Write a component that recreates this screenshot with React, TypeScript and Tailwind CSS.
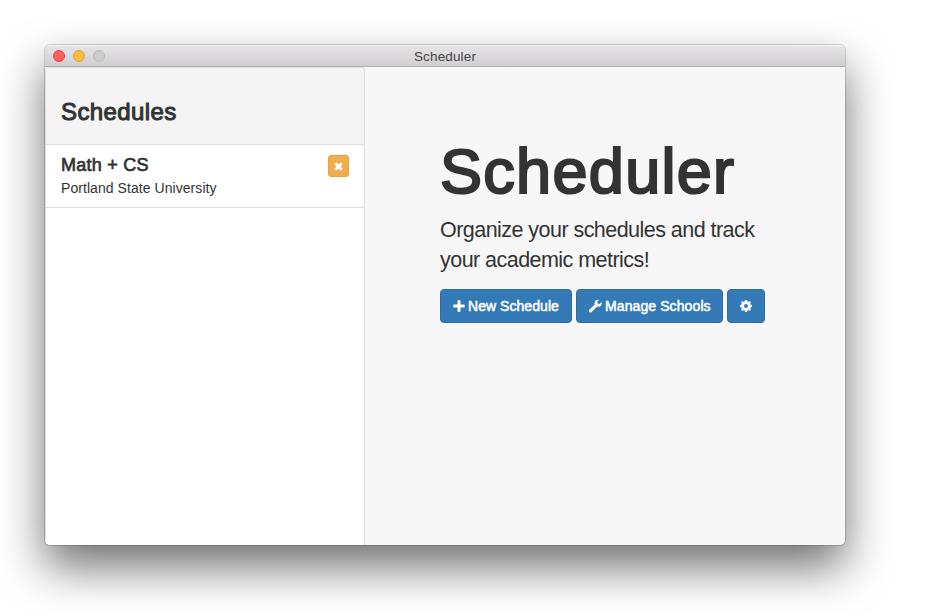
import React from "react";

function PlusIcon() {
  return (
    <svg viewBox="0 0 12 12" className="h-3 w-3 shrink-0" fill="currentColor">
      <path d="M5 .3h2a.5.5 0 0 1 .5.5v3.700h3.700a.5.5 0 0 1 .5.5v2a.5.5 0 0 1-.5.5H7.500v3.700a.5.5 0 0 1-.5.5H5a.5.5 0 0 1-.5-.5V7.500H.8a.5.5 0 0 1-.5-.5V5a.5.5 0 0 1 .5-.5h3.700V.8a.5.5 0 0 1 .5-.5z" />
    </svg>
  );
}

function WrenchIcon() {
  return (
    <svg viewBox="0 0 14 14" className="h-3.5 w-3.5 shrink-0" fill="currentColor">
      <path d="M11 .8 9.200 2.700l.4 1.800 1.900.5 2-1.900c.4 1.400 0 2.900-1 3.800-1 .9-2.300 1.100-3.500.7l-5.300 5.400a1.650 1.650 0 0 1-2.400-2.300l5.400-5.200c-.4-1.200-.1-2.700.8-3.700C8.400.8 9.800.5 11 .8z" />
    </svg>
  );
}

function CogIcon() {
  return (
    <svg viewBox="0 0 12 12" className="h-3 w-3" fill="currentColor">
      <path
        fillRule="evenodd"
        d="M4.900 0h2.200l.3 1.600.8.300L9.500 1 11 2.500l-.9 1.300.3.800 1.600.3v2.200l-1.600.3-.3.800.9 1.300L9.500 11l-1.300-.9-.8.300L7.100 12H4.900l-.3-1.600-.8-.3-1.300.9L1 9.500l.9-1.300-.3-.8L0 7.100V4.900l1.600-.3.300-.8L1 2.500 2.500 1l1.300.9.800-.3zM6 4a2 2 0 1 0 0 4 2 2 0 0 0 0-4z"
      />
    </svg>
  );
}

function RemoveIcon() {
  return (
    <svg viewBox="0 0 10 10" className="h-[9px] w-[9px]" fill="currentColor">
      <path d="M2.500.3 5 2.800 7.500.3 9.700 2.500 7.200 5l2.500 2.500-2.200 2.200L5 7.200 2.500 9.700.3 7.500 2.800 5 .3 2.500z" />
    </svg>
  );
}

const primary =
  "flex h-[34px] items-center rounded-[4px] border border-[#2e6da4] bg-[#337ab7] text-[14px] text-white";

export default function App() {
  return (
    <div className="h-[616px] w-[952px] overflow-hidden bg-white pt-[45px] pl-[45px] font-['Liberation_Sans',Arial,sans-serif] text-[#333]">
      <div className="flex h-[500px] w-[800px] flex-col overflow-hidden rounded-[5px] bg-[#f7f7f7] shadow-[0_0_0_1px_rgba(0,0,0,0.15),0_22px_46px_rgba(0,0,0,0.56)]">
        <header className="grid h-[22px] shrink-0 grid-cols-[1fr_auto_1fr] items-center border-t border-b border-t-[#f5f4f5] border-b-[#b1afb1] bg-linear-to-b from-[#e7e3e7] to-[#d0d0d0]">
          <div className="flex gap-2 pl-2">
            <span className="h-3 w-3 rounded-full border border-[#e2463f] bg-[#fc605b]" />
            <span className="h-3 w-3 rounded-full border border-[#dfa036] bg-[#fdbc40]" />
            <span className="h-3 w-3 rounded-full border border-[#b8b8b8] bg-[#cdcdcd]" />
          </div>
          <span className="pt-0.5 text-[13.5px] leading-4 tracking-[0.15px] text-[#464446]">Scheduler</span>
        </header>
        <div className="flex min-h-0 flex-1">
          <aside className="w-80 shrink-0 rounded-t-[4px] border border-b-0 border-[#ddd] bg-white">
            <div className="h-[77px] rounded-t-[3px] border-b border-[#ddd] bg-[#f4f4f4] px-[15px] pt-[31px]">
              <h2 className="text-[24px] leading-[26px] tracking-[0.4px] [-webkit-text-stroke:1px_#333]">Schedules</h2>
            </div>
            <div className="flex h-[63px] justify-between border-b border-[#ddd] pt-2.5 pr-[15px] pl-[15px]">
              <div>
                <h4 className="text-[18px] leading-5 tracking-[0.25px] [-webkit-text-stroke:0.7px_#333]">Math + CS</h4>
                <p className="mt-[3px] text-[14px] leading-5 tracking-[0.06px]">Portland State University</p>
              </div>
              <button className="flex h-[22px] w-[21px] items-center justify-center rounded-[3px] border border-[#eea236] bg-[#f0ad4e] text-white">
                <RemoveIcon />
              </button>
            </div>
          </aside>
          <main className="pt-[69px] pl-[75px]">
            <h1 className="text-[63px] leading-[70px] tracking-[1.3px] [-webkit-text-stroke:2.2px_#333]">Scheduler</h1>
            <p className="mt-[9px] w-[330px] text-[21.5px] leading-[30px] tracking-[-0.54px]">
              Organize your schedules and track your academic metrics!
            </p>
            <div className="mt-3.5 flex gap-1">
              <button className={primary + " w-[132px] gap-[3px] pl-3 whitespace-nowrap [-webkit-text-stroke:0.5px_#fff]"}>
                <PlusIcon />
                <span className="tracking-[0.05px]">New Schedule</span>
              </button>
              <button className={primary + " w-[147px] gap-[3px] pl-[11px] whitespace-nowrap [-webkit-text-stroke:0.5px_#fff]"}>
                <WrenchIcon />
                <span className="tracking-[0.1px]">Manage Schools</span>
              </button>
              <button className={primary + " w-[38px] justify-center"}>
                <CogIcon />
              </button>
            </div>
          </main>
        </div>
      </div>
    </div>
  );
}
